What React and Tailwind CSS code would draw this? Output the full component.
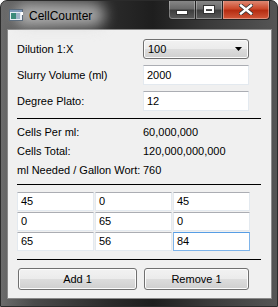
import React from "react";

const font = { fontFamily: '"Liberation Sans", Arial, sans-serif' };

function TextBox({ value, focused, tall, className = "" }) {
  return (
    <div
      className={`${tall ? "h-[20px]" : "h-[19px]"} bg-white border flex items-center pl-[3px] text-[11px] text-black ${
        focused
          ? "border-[#7eb4ea] border-t-[#569de5]"
          : "border-[#e3e9ef] border-t-[#abadb3]"
      } ${className}`}
    >
      {value}
    </div>
  );
}

function Separator() {
  return <div className="h-[1px] bg-black w-[244px]" />;
}

function WinButton({ children, className = "" }) {
  return (
    <button
      className={`h-[22px] rounded-[3px] border border-[#707070] text-[11px] text-black bg-[linear-gradient(to_bottom,#f2f2f2_0%,#ebebeb_50%,#dddddd_50%,#cfcfcf_100%)] shadow-[inset_0_0_0_1px_#fcfcfc] ${className}`}
    >
      {children}
    </button>
  );
}

export default function App() {
  const grid = ["45", "0", "45", "0", "65", "0", "65", "56", "84"];

  return (
    <div
      className="w-[278px] h-[307px] relative rounded-t-[7px] border border-[#2b2b2b] bg-[linear-gradient(to_right,#6b6b6b_0%,#4a4a4a_12%,#2a2a2a_40%,#1e1e1e_55%,#3a3a3a_75%,#555555_100%)] flex flex-col overflow-hidden"
      style={font}
    >
      {/* title bar */}
      <div className="h-[28px] flex items-start relative shrink-0">
        <div className="absolute left-[14px] top-[2px] w-[90px] h-[24px] rounded-full bg-[#d8d8d8] opacity-70 blur-[7px]" />
        <svg
          className="absolute left-[8px] top-[8px]"
          width="15"
          height="12"
          viewBox="0 0 15 12"
        >
          <rect x="0.5" y="0.5" width="13" height="11" fill="#e8eef4" stroke="#5a6a7a" />
          <rect x="1" y="1" width="12" height="2" fill="#7e98b8" />
          <rect x="2" y="4" width="5" height="6" fill="#3c8a7a" />
          <rect x="7" y="4" width="4" height="6" fill="#9fb4c8" />
          <rect x="12" y="3" width="2" height="3" fill="#ffffff" />
        </svg>
        <span className="absolute left-[28px] top-[8px] text-[12px] text-black leading-[14px]">
          CellCounter
        </span>
        <div className="absolute left-[167px] top-[-1px] flex h-[20px]">
          <div className="w-[28px] h-full border border-[#222] border-t-0 rounded-bl-[4px] bg-[linear-gradient(to_bottom,#8a8a8a_0%,#6a6a6a_45%,#3e3e3e_55%,#5a5a5a_100%)] shadow-[inset_0_0_0_1px_rgba(255,255,255,0.3)] flex items-center justify-center">
            <div className="w-[10px] h-[3px] bg-white border border-[#333] mt-[6px] box-content" />
          </div>
          <div className="w-[27px] h-full border-b border-r border-[#222] bg-[linear-gradient(to_bottom,#8a8a8a_0%,#6a6a6a_45%,#3e3e3e_55%,#5a5a5a_100%)] shadow-[inset_0_0_0_1px_rgba(255,255,255,0.3)] flex items-center justify-center">
            <div className="w-[10px] h-[7px] border-2 border-white border-t-[3px] outline outline-1 outline-[#333]" />
          </div>
          <div className="w-[47px] h-full border-b border-r border-[#222] rounded-br-[4px] bg-[linear-gradient(to_bottom,#e0907c_0%,#cc4a2c_45%,#b52d12_55%,#d2583a_100%)] shadow-[inset_0_0_0_1px_rgba(255,255,255,0.35)] flex items-center justify-center">
            <svg width="14" height="11" viewBox="0 0 14 11">
              <path
                d="M2 1.5 L12 9.5 M12 1.5 L2 9.5"
                stroke="#333"
                strokeWidth="4"
                strokeLinecap="square"
              />
              <path
                d="M2 1.5 L12 9.5 M12 1.5 L2 9.5"
                stroke="#fff"
                strokeWidth="2.4"
                strokeLinecap="square"
              />
            </svg>
          </div>
        </div>
      </div>

      {/* client area */}
      <div className="ml-[6px] mr-[5px] mb-[7px] flex-1 border border-[#8a8a8a] bg-[#f0f0f0] pl-[9px] pt-[9px] text-[11px] text-black flex flex-col">
        <div className="flex items-center h-[20px]">
          <span className="w-[126px]">Dilution 1:X</span>
          <div className="w-[106px] h-[20px] rounded-[3px] border border-[#707070] bg-[linear-gradient(to_bottom,#f2f2f2_0%,#ebebeb_50%,#dddddd_50%,#cfcfcf_100%)] shadow-[inset_0_0_0_1px_#fcfcfc] flex items-center justify-between pl-[4px] pr-[6px]">
            <span>100</span>
            <svg width="7" height="4" viewBox="0 0 7 4">
              <path d="M0 0 H7 L3.5 4 Z" fill="#000" />
            </svg>
          </div>
        </div>
        <div className="flex items-center h-[20px] mt-[6px]">
          <span className="w-[126px]">Slurry Volume (ml)</span>
          <TextBox value="2000" tall className="w-[106px]" />
        </div>
        <div className="flex items-center h-[20px] mt-[6px]">
          <span className="w-[126px]">Degree Plato:</span>
          <TextBox value="12" tall className="w-[106px]" />
        </div>

        <div className="mt-[7px]">
          <Separator />
        </div>

        <div className="flex flex-col mt-[4px]">
          <div className="flex items-center h-[19px]">
            <span className="w-[126px]">Cells Per ml:</span>
            <span>60,000,000</span>
          </div>
          <div className="flex items-center h-[19px]">
            <span className="w-[126px]">Cells Total:</span>
            <span>120,000,000,000</span>
          </div>
          <div className="flex items-center h-[19px]">
            <span className="w-[126px]">ml Needed / Gallon Wort:</span>
            <span>760</span>
          </div>
        </div>

        <div className="mt-[4px]">
          <Separator />
        </div>

        <div className="grid grid-cols-3 gap-x-[1px] gap-y-[1px] w-[233px] mt-[7px]">
          {grid.map((v, i) => (
            <TextBox key={i} value={v} focused={i === 8} />
          ))}
        </div>

        <div className="mt-[8px]">
          <Separator />
        </div>

        <div className="flex mt-[8px]">
          <WinButton className="w-[119px] ml-[1px]">Add 1</WinButton>
          <WinButton className="w-[105px] ml-[7px]">Remove 1</WinButton>
        </div>
      </div>
    </div>
  );
}
